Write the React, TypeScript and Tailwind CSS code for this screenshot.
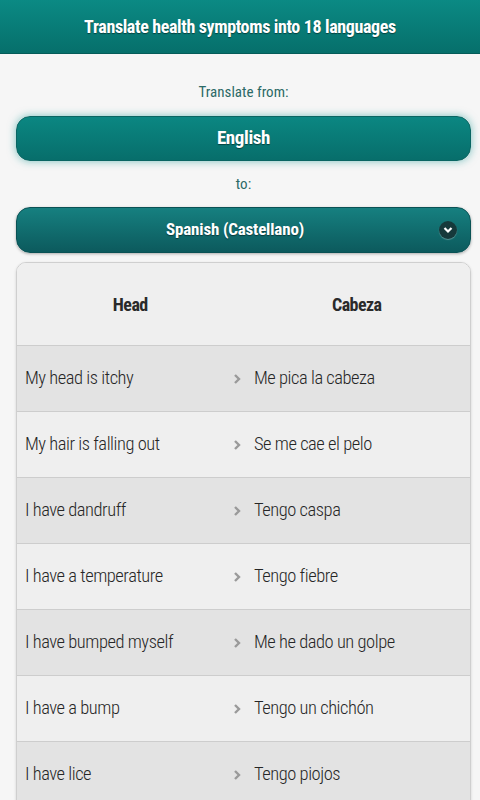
const rows: [string, string][] = [
  ['My head is itchy', 'Me pica la cabeza'],
  ['My hair is falling out', 'Se me cae el pelo'],
  ['I have dandruff', 'Tengo caspa'],
  ['I have a temperature', 'Tengo fiebre'],
  ['I have bumped myself', 'Me he dado un golpe'],
  ['I have a bump', 'Tengo un chichón'],
  ['I have lice', 'Tengo piojos'],
];

function Chevron() {
  return (
    <svg width="8" height="12" viewBox="0 0 8 12" className="shrink-0">
      <path d="M2 2l4 4-4 4" fill="none" stroke="#9a9a9a" strokeWidth="2.4" />
    </svg>
  );
}

export default function App() {
  return (
    <div className="min-h-[800px] bg-[#f6f6f6] text-[#333] font-['Roboto_Condensed',Roboto,sans-serif] font-stretch-condensed">
      <header className="h-[54px] flex items-center justify-center bg-gradient-to-b from-[#0b8a84] to-[#066f6b] border-b border-[#055c59]">
        <h1 className="text-[18px] font-bold tracking-[-0.02em] text-white [text-shadow:0_1px_1px_rgba(0,0,0,0.45)]">
          Translate health symptoms into 18 languages
        </h1>
      </header>

      <div className="pl-4 pr-[9px] pt-[29px]">
        <p className="text-center text-[15px] text-[#2c6a66] leading-[18px]">Translate from:</p>
        <div className="mt-[15px] h-[45px] rounded-[14px] flex items-center justify-center bg-gradient-to-b from-[#0b8782] to-[#076e6b] border border-[#0a6663] shadow-[0_0_8px_rgba(20,150,145,0.55)]">
          <span className="text-[19px] font-bold tracking-[-0.02em] text-white [text-shadow:0_1px_1px_rgba(0,0,0,0.45)]">English</span>
        </div>
        <p className="mt-[14px] text-center text-[15px] text-[#2c6a66] leading-[18px]">to:</p>
        <div className="relative mt-[14px] h-[46px] pr-[17px] rounded-[14px] flex items-center justify-center bg-gradient-to-b from-[#168080] to-[#0c5a5d] border border-[#0a5255] shadow-[0_1px_3px_rgba(0,0,0,0.3)]">
          <span className="text-[17px] font-bold tracking-[-0.01em] text-white [text-shadow:0_1px_1px_rgba(0,0,0,0.45)]">Spanish (Castellano)</span>
          <span className="absolute right-[13px] top-1/2 -translate-y-1/2 w-[18px] h-[18px] rounded-full bg-[#16393b] flex items-center justify-center shadow-[0_1px_1px_rgba(255,255,255,0.3)]">
            <svg width="10" height="8" viewBox="0 0 10 8">
              <path d="M1.5 2l3.5 3.5L8.5 2" fill="none" stroke="#fff" strokeWidth="2.2" />
            </svg>
          </span>
        </div>

        <div className="mt-[9px] rounded-t-[10px] border border-[#cfcfcf] overflow-hidden shadow-[0_1px_3px_rgba(0,0,0,0.15)]">
          <div className="h-[83px] grid grid-cols-2 items-center bg-[#efefef] border-b border-[#cdcdcd] text-[18px] font-bold tracking-[-0.03em] text-[#2a2a2a]">
            <span className="text-center">Head</span>
            <span className="text-center">Cabeza</span>
          </div>
          {rows.map(([en, es], i) => (
            <div
              key={en}
              className={`h-[66px] flex items-center border-b border-[#cdcdcd] text-[18.5px] font-light tracking-[-0.025em] text-[#262626] ${
                i % 2 === 0 ? 'bg-[#e3e3e3]' : 'bg-[#efefef]'
              }`}
            >
              <span className="w-[216px] pl-2">{en}</span>
              <Chevron />
              <span className="pl-[13px]">{es}</span>
            </div>
          ))}
        </div>
      </div>
    </div>
  );
}
